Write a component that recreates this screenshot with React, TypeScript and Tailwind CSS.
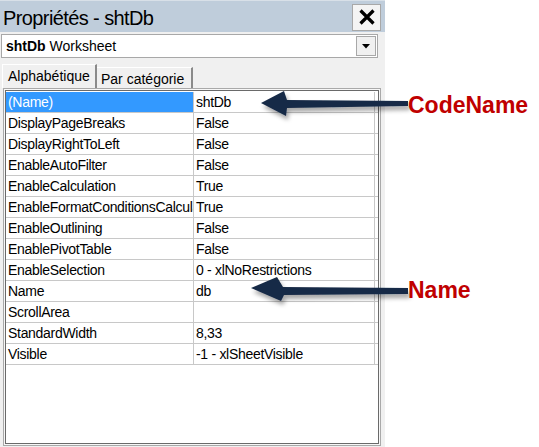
import React from 'react';

const rows: [string, string][] = [
  ['(Name)', 'shtDb'],
  ['DisplayPageBreaks', 'False'],
  ['DisplayRightToLeft', 'False'],
  ['EnableAutoFilter', 'False'],
  ['EnableCalculation', 'True'],
  ['EnableFormatConditionsCalculation', 'True'],
  ['EnableOutlining', 'False'],
  ['EnablePivotTable', 'False'],
  ['EnableSelection', '0 - xlNoRestrictions'],
  ['Name', 'db'],
  ['ScrollArea', ''],
  ['StandardWidth', '8,33'],
  ['Visible', '-1 - xlSheetVisible'],
];

export default function App() {
  return (
    <div className="relative w-[539px] h-[447px] bg-white overflow-hidden font-['Liberation_Sans',Arial,sans-serif] text-black">
      {/* Properties window */}
      <div className="w-[385px] h-full bg-[#f0f0f0] flex flex-col">
        {/* Title bar */}
        <div className="h-[32px] bg-[#bfcddb] border-t border-[#d8e0e8] flex items-center justify-between pl-[3px] pr-[4px]">
          <span className="text-[20px] tracking-[-0.6px] pt-[3px] leading-none">Propriétés - shtDb</span>
          <div className="w-[29px] h-[27px] mt-[1px] bg-[#f4f4f4] border border-[#a8a8a8] flex items-center justify-center">
            <svg width="16" height="16" viewBox="0 0 16 16">
              <path d="M1.5 1.5 L14.5 14.5 M14.5 1.5 L1.5 14.5" stroke="#000" strokeWidth="3.2" />
            </svg>
          </div>
        </div>

        {/* Object selector */}
        <div className="mt-[2px] ml-[1px] w-[377px] h-[24px] bg-white border border-[#a8a8a8] flex items-center justify-between pl-[4px] pr-[1px]">
          <span className="text-[14px] leading-none">
            <span className="font-bold">shtDb</span> Worksheet
          </span>
          <div className="w-[20px] h-[20px] bg-[#f0f0f0] border border-[#a8a8a8] flex items-center justify-center">
            <svg width="8" height="5" viewBox="0 0 8 5">
              <path d="M0 0 H8 L4 4.5 Z" fill="#000" />
            </svg>
          </div>
        </div>

        {/* Tabs */}
        <div className="mt-[6px] h-[24px] pl-[2px] flex items-end">
          <div className="w-[95px] h-[24px] border-l border-t border-white border-r-2 border-r-[#8a8a8a] flex items-center pl-[5px] text-[14px] leading-none pb-[1px]">
            Alphabétique
          </div>
          <div className="w-[96px] h-[21px] border-t border-white border-r-2 border-r-[#8a8a8a] flex items-center pl-[4px] text-[14px] leading-none pt-[1px]">
            Par catégorie
          </div>
        </div>

        {/* Property grid */}
        <div className="ml-[3px] w-[378px] h-[358px] border border-[#a9a9a9] p-[1px] bg-[#f7f7f7]">
          <div className="w-full h-full border border-[#6a6a6a] bg-white flex flex-col pt-[1px]">
            {rows.map(([name, value], i) => (
              <div key={name} className="flex h-[21px] border-b border-[#c8c8c8]">
                <div
                  className={
                    'w-[188px] border-r border-[#c8c8c8] pl-[2px] overflow-hidden whitespace-nowrap text-[14px] tracking-[-0.3px] leading-[20px] ' +
                    (i === 0 ? 'bg-[#3399ff] text-white' : '')
                  }
                >
                  {name}
                </div>
                <div className="w-[181px] border-r border-[#c8c8c8] pl-[2px] overflow-hidden whitespace-nowrap text-[14px] tracking-[-0.3px] leading-[20px]">
                  {value}
                </div>
              </div>
            ))}
          </div>
        </div>
      </div>

      {/* Annotation arrows */}
      <svg className="absolute inset-0 pointer-events-none" width="539" height="447" viewBox="0 0 539 447">
        <defs>
          <filter id="sh" x="-10%" y="-50%" width="130%" height="220%">
            <feDropShadow dx="2" dy="4" stdDeviation="2" floodColor="#000" floodOpacity="0.35" />
          </filter>
        </defs>
        <polygon
          points="261,103 284,91 287,100 408,101 408,106 287,108 286,116"
          fill="#172a46"
          filter="url(#sh)"
        />
        <polygon
          points="251,288 277,277 283,287 408,288 408,294 284,295 281,301"
          fill="#172a46"
          filter="url(#sh)"
        />
      </svg>

      {/* Annotation labels */}
      <span className="absolute left-[408px] top-[94px] text-[23px] font-bold leading-none text-[#c00000]">CodeName</span>
      <span className="absolute left-[408px] top-[279px] text-[23px] font-bold leading-none text-[#c00000]">Name</span>
    </div>
  );
}
